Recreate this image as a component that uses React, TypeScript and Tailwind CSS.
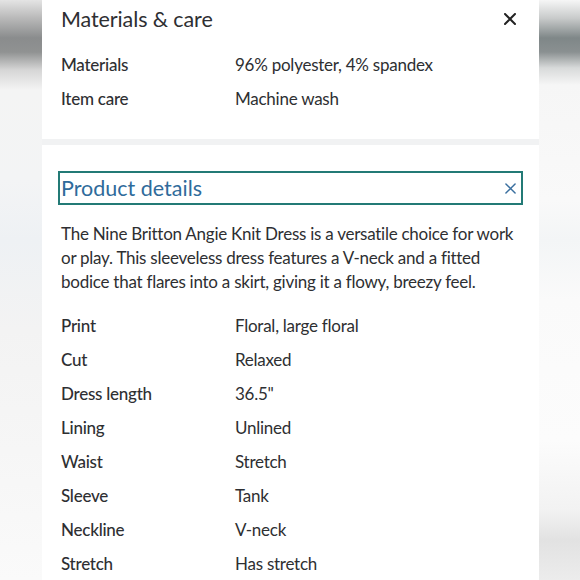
const FONT = { fontFamily: 'Lato, "Open Sans", "Liberation Sans", sans-serif' }

const CARE = [
  ['Materials', '96% polyester, 4% spandex'],
  ['Item care', 'Machine wash'],
]

const DETAILS = [
  ['Print', 'Floral, large floral'],
  ['Cut', 'Relaxed'],
  ['Dress length', '36.5"'],
  ['Lining', 'Unlined'],
  ['Waist', 'Stretch'],
  ['Sleeve', 'Tank'],
  ['Neckline', 'V-neck'],
  ['Stretch', 'Has stretch'],
]

function CloseIcon({ className, stroke }: { className: string; stroke: number }) {
  return (
    <svg viewBox="0 0 12 12" className={className} fill="none" stroke="currentColor" strokeWidth={stroke} strokeLinecap="round">
      <path d="M1 1 L11 11 M11 1 L1 11" />
    </svg>
  )
}

function SpecRow({ label, value }: { label: string; value: string }) {
  return (
    <div className="flex h-[34px] items-center text-[17px] tracking-[-0.25px] text-[#2e2f32]">
      <div className="w-[174px] shrink-0 font-medium">{label}</div>
      <div>{value}</div>
    </div>
  )
}

export default function App() {
  return (
    <div className="flex h-[580px] w-[580px] overflow-hidden" style={FONT}>
      {/* left blurred strip */}
      <div className="w-[42px] shrink-0 bg-[linear-gradient(to_bottom,#e4e4e4_0px,#b9b9b9_18px,#8a8c8d_38px,#909292_52px,#d6d6d6_70px,#f4f4f4_90px,#f3f4f5_180px,#eef1f4_240px,#f3f3f3_330px,#f6f6f6_450px,#fafafa_580px)]" />

      {/* panel */}
      <div className="flex w-[497px] shrink-0 flex-col bg-white">
        {/* Materials & care */}
        <section className="h-[139px] shrink-0 px-[19px] pt-[4px]">
          <div className="flex items-center justify-between">
            <h2 className="text-[21.5px] leading-[30px] tracking-[-0.1px] text-[#2e2f32]">Materials &amp; care</h2>
            <CloseIcon className="mr-[4px] h-[12px] w-[12px] text-[#222]" stroke={2} />
          </div>
          <div className="mt-[14px]">
            {CARE.map(([l, v]) => <SpecRow key={l} label={l} value={v} />)}
          </div>
        </section>

        <div className="h-[6px] shrink-0 bg-[#f1f2f3]" />

        {/* Product details */}
        <section className="shrink-0 px-[16px] pt-[26px]">
          <div className="flex h-[34px] items-center justify-between border-2 border-[#237a76] pl-[1px] pr-[5px]">
            <h2 className="text-[21.5px] leading-[28px] text-[#2f6b9b]">Product details</h2>
            <CloseIcon className="h-[11px] w-[11px] text-[#3a6f9f]" stroke={1.6} />
          </div>
          <div className="px-[3px]">
            <p className="mt-[17px] text-[17px] leading-[24px] tracking-[-0.25px] text-[#2e2f32]">
              The Nine Britton Angie Knit Dress is a versatile choice for work or play. This sleeveless dress features a V-neck and a fitted bodice that flares into a skirt, giving it a flowy, breezy feel.
            </p>
            <div className="mt-[15px]">
              {DETAILS.map(([l, v]) => <SpecRow key={l} label={l} value={v} />)}
            </div>
          </div>
        </section>
      </div>

      {/* right blurred strip */}
      <div className="w-[41px] shrink-0 bg-[linear-gradient(to_bottom,#f6f6f6_0px,#c9cbcb_18px,#7f8788_38px,#8a9091_52px,#d8dada_68px,#f6f6f6_85px,#f9f9f9_200px,#f3f5f6_240px,#fafafa_300px,#fcfcfc_440px,#f2f2f2_510px,#e2e2e2_540px,#ececec_580px)]" />
    </div>
  )
}
